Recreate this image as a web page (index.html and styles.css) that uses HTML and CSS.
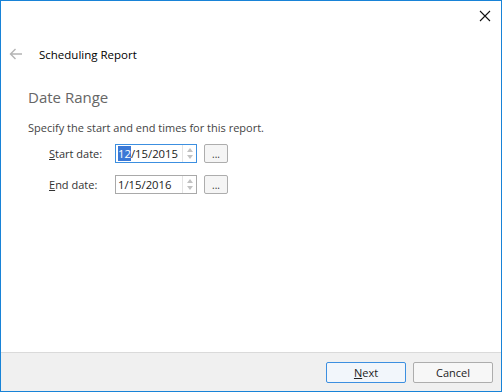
FILE: index.html
```html
<!DOCTYPE html>
<html lang="en">
<head>
  <meta charset="UTF-8">
  <title>Scheduling Report</title>
  <link rel="stylesheet" href="styles.css">
</head>
<body>
  <div class="window">
    <!-- Title bar -->
    <div class="titlebar">
      <svg class="close" width="12" height="12" viewBox="0 0 12 12"><path d="M1 1L11 11M11 1L1 11" stroke="#111" stroke-width="1.1" fill="none"/></svg>
    </div>

    <!-- Header -->
    <div class="header">
      <svg class="back" width="14" height="12" viewBox="0 0 14 12"><path d="M13 6H1.5M6.5 1L1.5 6L6.5 11" stroke="#b4b4b4" stroke-width="1.4" fill="none"/></svg>
      <span class="title">Scheduling Report</span>
    </div>

    <div class="content">
      <h2>Date Range</h2>
      <p class="desc">Specify the start and end times for this report.</p>

      <div class="fields">
        <div class="row">
          <label><u>S</u>tart date:</label>
          <div class="date-box focused">
            <span class="value"><span class="sel">12</span>/15/2015</span>
            <div class="spin"><span class="up"></span><span class="down"></span></div>
          </div>
          <button class="dots">...</button>
        </div>
        <div class="row">
          <label><u>E</u>nd date:</label>
          <div class="date-box">
            <span class="value">1/15/2016</span>
            <div class="spin"><span class="up"></span><span class="down"></span></div>
          </div>
          <button class="dots">...</button>
        </div>
      </div>
    </div>

    <!-- Footer -->
    <div class="footer">
      <button class="btn default"><u>N</u>ext</button>
      <button class="btn">Cancel</button>
    </div>
  </div>
</body>
</html>
```

FILE: styles.css
```css
* { margin: 0; padding: 0; box-sizing: border-box; font-family: 'Open Sans', 'Noto Sans', sans-serif; }
body { background: white; }

.window {
  width: 502px;
  height: 392px;
  border: 1px solid #1883d7;
  display: flex;
  flex-direction: column;
  background: white;
}

.titlebar { height: 36px; display: flex; justify-content: flex-end; align-items: center; padding-right: 10px; padding-bottom: 6px; }

.header { display: flex; align-items: center; height: 34px; padding-left: 8px; }
.back { margin-right: 16px; }
.title { font-size: 11.5px; color: #000; }

.content { flex: 1; padding: 0 27px; }
h2 { font-weight: normal; font-size: 15px; color: #666; margin-top: 16px; }
.desc { font-size: 11px; color: #444; margin-top: 13px; }

.fields { padding-left: 21px; margin-top: 7px; }
.row { display: flex; align-items: center; height: 23px; margin-bottom: 8px; }
label { font-size: 11px; color: #333; width: 66px; }

.date-box {
  width: 82px;
  height: 19px;
  border: 1px solid #a9a9a9;
  display: flex;
  align-items: stretch;
  background: white;
}
.date-box.focused { border-color: #3c8fe0; }
.value { flex: 1; font-size: 11.3px; color: #222; padding-left: 2px; line-height: 17px; white-space: nowrap; }
.sel { background: #3a78d6; color: white; }
.spin { width: 14px; display: flex; flex-direction: column; justify-content: center; gap: 3px; align-items: center; border-left: 1px solid #e4e4e4; }
.up { width: 0; height: 0; border-left: 3.5px solid transparent; border-right: 3.5px solid transparent; border-bottom: 4px solid #c2c2c2; }
.down { width: 0; height: 0; border-left: 3.5px solid transparent; border-right: 3.5px solid transparent; border-top: 4px solid #c2c2c2; }

.dots {
  width: 24px;
  height: 19px;
  margin-left: 7px;
  border: 1px solid #adadad;
  border-radius: 2px;
  background: #f5f5f5;
  font-size: 10px;
  color: #333;
  line-height: 12px;
}

.footer {
  height: 39px;
  background: #f0f0f0;
  border-top: 1px solid #dadada;
  display: flex;
  justify-content: flex-end;
  align-items: center;
  gap: 7px;
  padding-right: 8px;
}
.btn {
  width: 80px;
  height: 21px;
  border: 1px solid #adadad;
  border-radius: 2px;
  background: #f7f7f7;
  font-size: 11px;
  color: #222;
}
.btn.default { border-color: #3c8fe0; background: #f2f6fb; }
```
